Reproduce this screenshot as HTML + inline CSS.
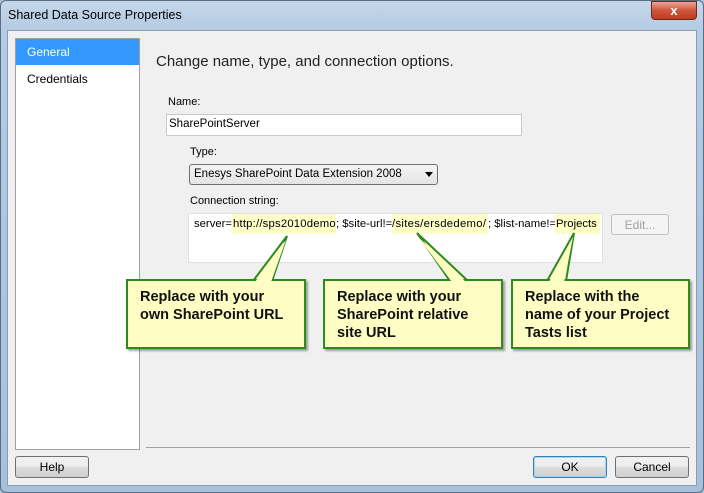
<!DOCTYPE html>
<html><head><style>
*{margin:0;padding:0;box-sizing:border-box}
body{width:704px;height:493px;overflow:hidden;background:#a9c0d9;font-family:"Liberation Sans",sans-serif;position:relative}
.abs{position:absolute}
.frame{left:0;top:0;width:704px;height:493px;background:linear-gradient(180deg,#c5d7ea 0,#b4cbe3 30px,#a8c0dc 100%);border:1px solid #5b6d85;border-radius:6px}
.inner{left:7px;top:30px;width:690px;height:456px;background:#f0f0f0;border:1px solid #8a9cb3}
.t{font-size:12px;color:#000;white-space:nowrap}
.btn{border:1px solid #707070;border-radius:3px;background:linear-gradient(#f2f2f2,#ebebeb 50%,#dddddd 51%,#cfcfcf);font-size:12px;text-align:center;line-height:20px}
.call{background:#fdfdc4;border:2px solid #2e8a1e;box-shadow:2px 2px 2px rgba(0,0,0,.35);font-weight:bold;font-size:14.5px;line-height:18px;padding:7px 0 0 12px;color:#111}
.hl{background:#fdfdc8}
.cs{position:absolute;top:214px;height:20px;line-height:20px;font-size:11.3px;white-space:nowrap}
</style></head><body>
<div class="abs frame"></div>
<div class="abs t" style="left:8px;top:8px;font-size:12.5px">Shared Data Source Properties</div>
<div class="abs" style="left:651px;top:1px;width:46px;height:19px;border:1px solid #6b2a20;border-radius:0 0 4px 4px;background:linear-gradient(#e8a493,#d0553c 50%,#c03c22);color:#fff;font-weight:bold;font-size:13px;text-align:center;line-height:17px">x</div>
<div class="abs inner"></div>
<div class="abs" style="left:15px;top:38px;width:125px;height:412px;background:#fff;border:1px solid #a0a0a0"></div>
<div class="abs" style="left:16px;top:39px;width:123px;height:26px;background:#3399ff"></div>
<div class="abs t" style="left:27px;top:45px;color:#fff">General</div>
<div class="abs t" style="left:27px;top:72px">Credentials</div>
<div class="abs t" style="left:156px;top:53px;font-size:15px;color:#222">Change name, type, and connection options.</div>
<div class="abs t" style="left:168px;top:96px;font-size:11px">Name:</div>
<div class="abs" style="left:166px;top:114px;width:356px;height:22px;background:#fff;border:1px solid #c8c8c8"></div>
<div class="abs t" style="left:169px;top:118px;font-size:11.5px">SharePointServer</div>
<div class="abs t" style="left:190px;top:146px;font-size:11px">Type:</div>
<div class="abs" style="left:189px;top:164px;width:249px;height:21px;border:1px solid #707070;border-radius:3px;background:linear-gradient(#f4f4f4,#e4e4e4)"></div>
<div class="abs t" style="left:194px;top:168px;font-size:11.5px">Enesys SharePoint Data Extension 2008</div>
<div class="abs" style="left:425px;top:172px;border-left:4px solid transparent;border-right:4px solid transparent;border-top:5px solid #000"></div>
<div class="abs t" style="left:190px;top:195px;font-size:11px">Connection string:</div>
<div class="abs" style="left:188px;top:213px;width:415px;height:50px;background:#fff;border:1px solid #e0e0e0"></div>
<div class="cs" style="left:194px">server=</div>
<div class="cs hl" style="left:232px;width:104px;padding-left:1px;letter-spacing:0.2px">http://sps2010demo</div>
<div class="cs" style="left:336px">; $site-url!=</div>
<div class="cs hl" style="left:392px;width:96px;letter-spacing:0.3px">/sites/ersdedemo/</div>
<div class="cs" style="left:488px">; $list-name!=</div>
<div class="cs hl" style="left:555px;width:45px;padding-left:1px">Projects</div>
<div class="abs btn" style="left:611px;top:214px;width:58px;height:21px;border-color:#c0c0c0;background:#f4f4f4;color:#a0a0a0">Edit...</div>
<svg class="abs" style="left:0;top:0" width="704" height="493">
<g fill="#fdfdc4" stroke="#2e8a1e" stroke-width="2">
<polygon points="253,281 287,236 272,281"/>
<polygon points="450,281 417,233 468,281"/>
<polygon points="547,281 574,233 566,281"/>
</g></svg>
<div class="abs call" style="left:126px;top:279px;width:180px;height:70px">Replace with your<br>own SharePoint URL</div>
<div class="abs call" style="left:323px;top:279px;width:180px;height:70px">Replace with your<br>SharePoint relative<br>site URL</div>
<div class="abs call" style="left:511px;top:279px;width:179px;height:70px">Replace with the<br>name of your Project<br>Tasts list</div>
<svg class="abs" style="left:0;top:0" width="704" height="493">
<g fill="#fdfdc4"><polygon points="255,282 286,240 271,282"/><polygon points="452,282 418,237 466,282"/><polygon points="549,282 573,237 564,282"/></g>
</svg>
<div class="abs" style="left:146px;top:447px;width:544px;height:1px;background:#a0a0a0"></div>
<div class="abs btn" style="left:15px;top:456px;width:74px;height:22px">Help</div>
<div class="abs btn" style="left:533px;top:456px;width:74px;height:22px;border-color:#3c7fb1;box-shadow:inset 0 0 0 1px #9fd5f5">OK</div>
<div class="abs btn" style="left:615px;top:456px;width:74px;height:22px">Cancel</div>
</body></html>
